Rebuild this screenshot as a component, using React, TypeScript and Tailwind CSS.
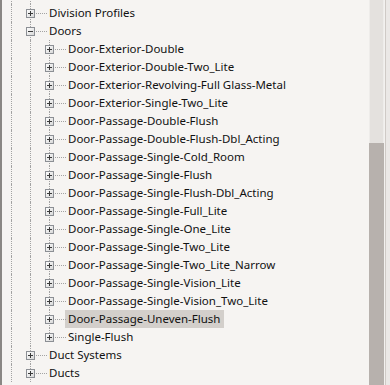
import React from "react";

type Row = { label: string; level: 1 | 2; expanded?: boolean; selected?: boolean; lastChild?: boolean };

const children = [
  "Door-Exterior-Double",
  "Door-Exterior-Double-Two_Lite",
  "Door-Exterior-Revolving-Full Glass-Metal",
  "Door-Exterior-Single-Two_Lite",
  "Door-Passage-Double-Flush",
  "Door-Passage-Double-Flush-Dbl_Acting",
  "Door-Passage-Single-Cold_Room",
  "Door-Passage-Single-Flush",
  "Door-Passage-Single-Flush-Dbl_Acting",
  "Door-Passage-Single-Full_Lite",
  "Door-Passage-Single-One_Lite",
  "Door-Passage-Single-Two_Lite",
  "Door-Passage-Single-Two_Lite_Narrow",
  "Door-Passage-Single-Vision_Lite",
  "Door-Passage-Single-Vision_Two_Lite",
  "Door-Passage-Uneven-Flush",
  "Single-Flush",
];

const rows: Row[] = [
  { label: "", level: 1 },
  { label: "Division Profiles", level: 1 },
  { label: "Doors", level: 1, expanded: true },
  ...children.map((c, i) => ({
    label: c,
    level: 2 as const,
    selected: c === "Door-Passage-Uneven-Flush",
    lastChild: i === children.length - 1,
  })),
  { label: "Duct Systems", level: 1 },
  { label: "Ducts", level: 1 },
];

function Expander({ open }: { open?: boolean }) {
  return (
    <svg width="9" height="9" viewBox="0 0 9 9" className="block">
      <defs>
        <linearGradient id="eg" x1="0" y1="0" x2="1" y2="1">
          <stop offset="0" stopColor="#ffffff" />
          <stop offset="1" stopColor="#d6d6d6" />
        </linearGradient>
      </defs>
      <rect x="0.5" y="0.5" width="8" height="8" fill="url(#eg)" stroke="#8c8f94" />
      <rect x="2" y="4" width="5" height="1" fill="#3a3a3a" />
      {!open && <rect x="4" y="2" width="1" height="5" fill="#3a3a3a" />}
    </svg>
  );
}

function FullLine() {
  return (
    <div className="w-[19px] h-full shrink-0 flex justify-start">
      <div className="ml-[9px] h-full border-l border-dotted border-[#a3a3a3]" />
    </div>
  );
}

function BoxCol({ open, downLine }: { open?: boolean; downLine?: boolean }) {
  return (
    <div className="relative w-[19px] h-full shrink-0">
      <div className="absolute left-[9px] top-0 h-[5px] border-l border-dotted border-[#a3a3a3]" />
      {downLine && <div className="absolute left-[9px] top-[13px] bottom-0 border-l border-dotted border-[#a3a3a3]" />}
      <div className="absolute left-[5px] top-[5px]">
        <Expander open={open} />
      </div>
      <div className="absolute left-[15px] top-[9px] w-[11px] border-t border-dotted border-[#a3a3a3]" />
    </div>
  );
}

export default function App() {
  return (
    <div
      className="w-[390px] h-[385px] overflow-hidden flex bg-[#f6f4f2] text-[#111111]"
      style={{ fontFamily: '"Noto Sans", "Open Sans", sans-serif' }}
    >
      <div className="w-[2px] h-full bg-[#8a8784] shrink-0" />
      <div className="flex-1 h-full overflow-hidden">
        <div className="-mt-[14px] flex flex-col">
          {rows.map((r, idx) => (
            <div key={idx} className="h-[18px] flex items-stretch">
              <FullLine />
              {r.level === 1 ? (
                <BoxCol open={r.expanded} downLine />
              ) : (
                <>
                  <FullLine />
                  <BoxCol downLine={!r.lastChild} />
                </>
              )}
              {r.label && (
                <div className="flex items-center pl-[6px]">
                  <span
                    className={
                      "pl-[3px] pr-[4px] h-[18px] flex items-center text-[11.5px] leading-none whitespace-nowrap " +
                      (r.selected ? "bg-[#d3cfcb]" : "")
                    }
                  >
                    {r.label}
                  </span>
                </div>
              )}
            </div>
          ))}
        </div>
      </div>
      <div className="w-[15px] h-full shrink-0 flex flex-col">
        <div className="h-[143px] bg-[#e4e1de] border-x border-[#eeecea]" />
        <div className="flex-1 bg-[#b7b1ad]" />
      </div>
      <div className="w-[1px] h-full bg-[#f3f1ef]" />
      <div className="w-[1px] h-full bg-[#cfcac6]" />
      <div className="w-[4px] h-full bg-[#ebe8e6]" />
    </div>
  );
}
